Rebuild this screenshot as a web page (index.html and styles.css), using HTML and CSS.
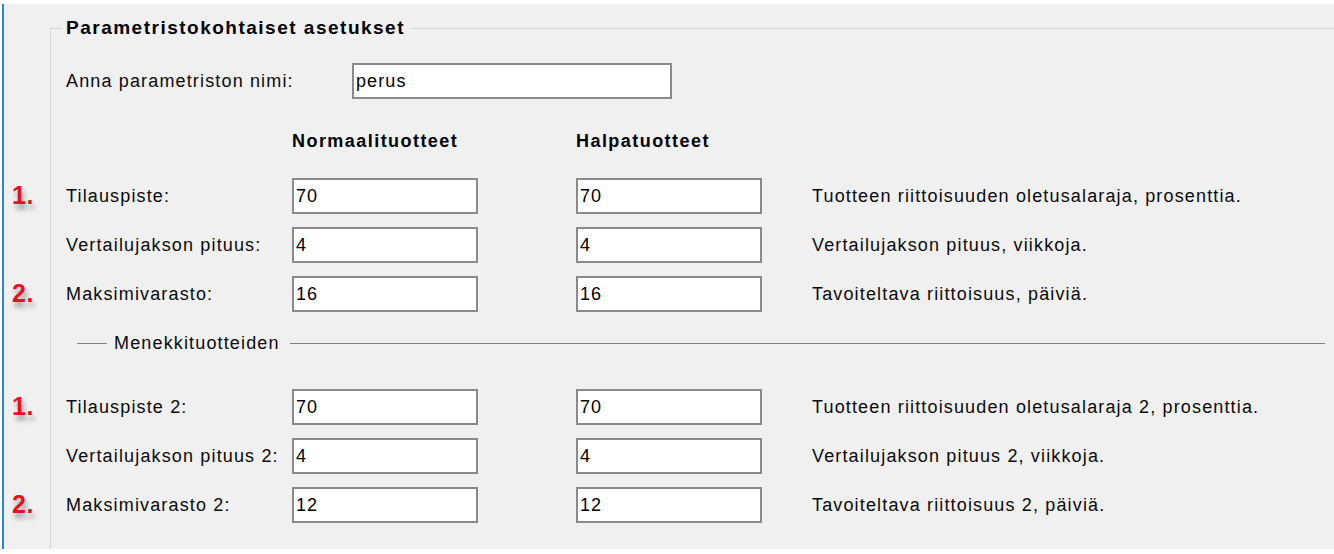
FILE: index.html
```html
<!DOCTYPE html>
<html lang="fi">
<head>
<meta charset="utf-8">
<title>Parametristokohtaiset asetukset</title>
<link rel="stylesheet" href="styles.css">
</head>
<body>
<div class="window">
  <fieldset class="group">
    <legend class="group-title">Parametristokohtaiset asetukset</legend>

    <div class="name-row">
      <label class="name-label" for="pname">Anna parametriston nimi:</label>
      <input id="pname" class="name-input" type="text" value="perus">
    </div>

    <div class="grid head">
      <span></span>
      <span class="col-head">Normaalituotteet</span>
      <span class="col-head">Halpatuotteet</span>
      <span></span>
    </div>

    <div class="grid rows first-rows">
      <div class="label"><span class="marker">1.</span>Tilauspiste:</div>
      <div><input class="field" type="text" value="70"></div>
      <div><input class="field" type="text" value="70"></div>
      <div class="desc">Tuotteen riittoisuuden oletusalaraja, prosenttia.</div>

      <div class="label">Vertailujakson pituus:</div>
      <div><input class="field" type="text" value="4"></div>
      <div><input class="field" type="text" value="4"></div>
      <div class="desc">Vertailujakson pituus, viikkoja.</div>

      <div class="label"><span class="marker">2.</span>Maksimivarasto:</div>
      <div><input class="field" type="text" value="16"></div>
      <div><input class="field" type="text" value="16"></div>
      <div class="desc">Tavoiteltava riittoisuus, päiviä.</div>
    </div>

    <div class="separator">
      <span class="sep-line short"></span>
      <span class="sep-text">Menekkituotteiden</span>
      <span class="sep-line long"></span>
    </div>

    <div class="grid rows second-rows">
      <div class="label"><span class="marker">1.</span>Tilauspiste 2:</div>
      <div><input class="field" type="text" value="70"></div>
      <div><input class="field" type="text" value="70"></div>
      <div class="desc">Tuotteen riittoisuuden oletusalaraja 2, prosenttia.</div>

      <div class="label">Vertailujakson pituus 2:</div>
      <div><input class="field" type="text" value="4"></div>
      <div><input class="field" type="text" value="4"></div>
      <div class="desc">Vertailujakson pituus 2, viikkoja.</div>

      <div class="label"><span class="marker">2.</span>Maksimivarasto 2:</div>
      <div><input class="field" type="text" value="12"></div>
      <div><input class="field" type="text" value="12"></div>
      <div class="desc">Tavoiteltava riittoisuus 2, päiviä.</div>
    </div>
  </fieldset>
</div>
</body>
</html>
```

FILE: styles.css
```css
html, body {
  margin: 0;
  padding: 0;
  background: #ffffff;
}

body {
  font-family: "Liberation Sans", Arial, sans-serif;
  font-size: 18px;
  letter-spacing: 1.15px;
  color: #0a0a0a;
}

.window {
  margin: 4px 0 0 2px;
  height: 545px;
  box-sizing: border-box;
  border-left: 2px solid #2b88d8;
  background: #f0f0f0;
  padding: 13px 0 0 46px;
  overflow: hidden;
}

.group {
  margin: 0;
  padding: 0 0 0 15px;
  min-width: 0;
  height: 600px;
  border: 1px solid #d6d6d6;
  border-right: none;
  border-bottom: none;
}

.group-title {
  margin-left: -4px;
  padding: 0 6px 0 4px;
  font-weight: bold;
  font-size: 19px;
  letter-spacing: 1.5px;
  line-height: 22px;
  color: #000;
}

.name-row {
  display: flex;
  align-items: center;
  margin-top: 24px;
  height: 36px;
}

.name-label {
  width: 286px;
}

input {
  font-family: inherit;
  font-size: 18px;
  letter-spacing: 1.1px;
  color: #000;
  background: #ffffff;
  border: 2px solid #8a8a8a;
  box-sizing: border-box;
  height: 36px;
  padding: 0 0 0 2px;
  margin: 0;
  outline: none;
}

.name-input {
  width: 320px;
}

.grid {
  display: grid;
  grid-template-columns: 226px 284px 236px 1fr;
  align-items: center;
}

.head {
  margin-top: 30px;
  height: 24px;
}

.col-head {
  font-weight: bold;
  letter-spacing: 1.45px;
  color: #000;
}

.rows {
  grid-auto-rows: 36px;
  row-gap: 13px;
}

.first-rows {
  margin-top: 25px;
}

.second-rows {
  margin-top: 35px;
}

.label {
  position: relative;
}

.field {
  width: 186px;
  display: block;
}

.marker {
  position: absolute;
  left: -54px;
  top: 50%;
  transform: translateY(-52%);
  font-size: 25px;
  font-weight: bold;
  letter-spacing: 0.5px;
  color: #e8101c;
  text-shadow: 2px 5px 5px rgba(0, 0, 0, 0.35);
}

.separator {
  display: flex;
  align-items: center;
  margin-top: 20px;
  height: 22px;
  padding-left: 11px;
}

.sep-line {
  height: 1px;
  background: #7f7f7f;
}

.sep-line.short {
  width: 30px;
}

.sep-line.long {
  flex: 1;
  margin-right: 9px;
}

.sep-text {
  padding: 0 10px 0 7px;
}
```
